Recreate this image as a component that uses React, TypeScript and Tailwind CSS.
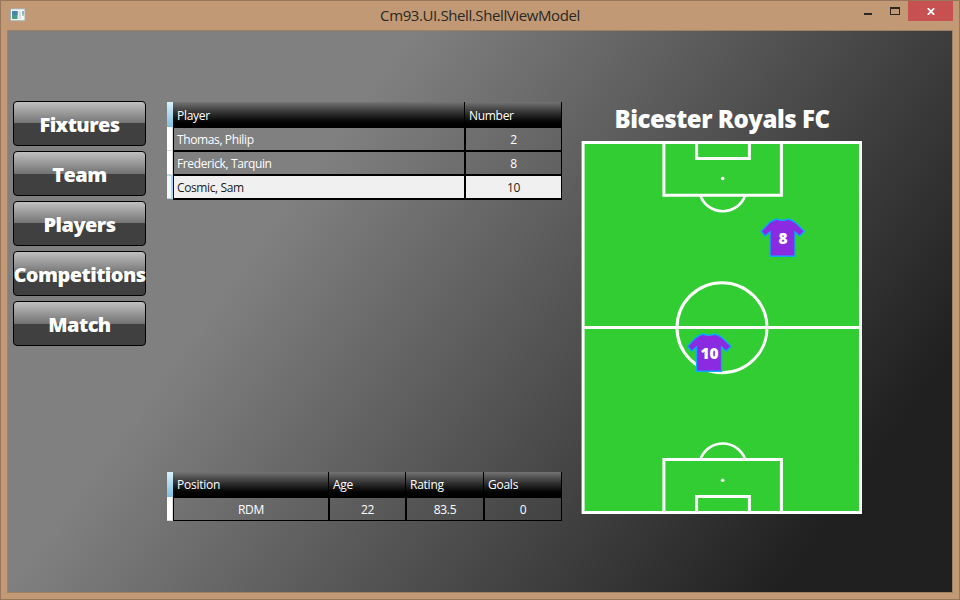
import React from 'react';

const ui = "font-['Open_Sans','Noto_Sans',sans-serif]";

const menu = ['Fixtures', 'Team', 'Players', 'Competitions', 'Match'];

const players = [
  { name: 'Thomas, Philip', number: 2, selected: false },
  { name: 'Frederick, Tarquin', number: 8, selected: false },
  { name: 'Cosmic, Sam', number: 10, selected: true },
];

function TitleBar() {
  return (
    <header className="flex h-[29px] shrink-0 items-start pl-2">
      <svg width="17" height="14" viewBox="0 0 17 14" className="mt-[7px]">
        <rect x="1.5" y="0.8" width="14.5" height="12" rx="1" fill="#f4f5f5" stroke="#a3adb3" />
        <rect x="3" y="3" width="5.5" height="8" fill="#4a9a86" />
        <rect x="3" y="3" width="5.5" height="4" fill="#4585a5" />
        <rect x="9.5" y="3" width="2.5" height="8" fill="#dcdedf" />
        <rect x="13" y="3" width="2" height="3" fill="#86b5cf" />
        <rect x="13" y="6" width="2" height="2" fill="#a9cfaa" />
      </svg>
      <h1 className="ml-[1px] flex-1 pl-[79px] pt-[4px] text-center text-[15px] leading-5 tracking-[-0.4px] text-[#2b2725]">
        Cm93.UI.Shell.ShellViewModel
      </h1>
      <div className="flex h-5 w-[54px] shrink-0">
        <svg width="54" height="20" viewBox="0 0 54 20" shapeRendering="crispEdges">
          <rect x="10" y="12" width="8" height="2" fill="#2b2725" />
          <path d="M36 6h10v8H36zM37 8v5h8V8z" fill="#2b2725" fillRule="evenodd" />
        </svg>
      </div>
      <div className="mr-1.5 flex h-5 w-[45px] shrink-0 justify-center bg-[#c75050] pl-px pt-[7px]">
        <svg width="8" height="7" viewBox="0 0 8 7">
          <path d="M0.8 0.2l6.4 6.6M7.2 0.2L0.8 6.8" stroke="#fff" strokeWidth="1.8" />
        </svg>
      </div>
    </header>
  );
}

function HeaderCell({ className, children }: { className: string; children: React.ReactNode }) {
  return <div className={`flex h-[25px] items-center border-r border-black ${className}`}>{children}</div>;
}

function PlayersTable() {
  return (
    <div className="h-[98px] w-[395px] text-[12px] leading-4 tracking-[-0.38px] text-white">
      <div className="flex h-[25px] bg-gradient-to-b from-[#747474] to-black">
        <div className="w-1.5 bg-gradient-to-b from-[#d8f3fd] to-[#7cbfdf]" />
        <HeaderCell className="w-[292px] pl-[4px] pt-[2px] tracking-[-0.3px]">Player</HeaderCell>
        <HeaderCell className="w-[97px] pl-[4px] pt-[2px] tracking-[-0.3px]">Number</HeaderCell>
      </div>
      {players.map((p) => (
        <div key={p.name} className="flex h-6">
          <div
            className={
              p.selected
                ? 'w-1.5 border-y border-r-2 border-[#a5dcf5] bg-[#f3f8fb]'
                : 'w-1.5 border-b border-r border-[#dcdcdc] bg-white'
            }
          />
          <div className="flex w-[389px] border-y border-l border-black">
            <div
              className={`flex w-[290px] items-center border-black pl-[3px] pt-[2px] ${p.selected ? 'bg-[#f0f0f0] text-[#1c1c1c]' : ''}`}
            >
              {p.name}
            </div>
            <div
              className={`flex flex-1 items-center justify-center border-l-2 border-r border-black pt-[2px] ${p.selected ? 'bg-[#f0f0f0] text-[#1c1c1c]' : ''}`}
            >
              {p.number}
            </div>
          </div>
        </div>
      ))}
      <div className="ml-1.5 h-px bg-black" />
    </div>
  );
}

function StatsTable() {
  return (
    <div className="w-[395px] text-[12px] leading-4 tracking-[-0.25px] text-white">
      <div className="flex h-[25px] bg-gradient-to-b from-[#747474] to-black">
        <div className="w-1.5 bg-gradient-to-b from-[#d8f3fd] to-[#7cbfdf]" />
        <HeaderCell className="w-[156px] pl-[4px]">Position</HeaderCell>
        <HeaderCell className="w-[77px] pl-[4px]">Age</HeaderCell>
        <HeaderCell className="w-[78px] pl-[4px]">Rating</HeaderCell>
        <HeaderCell className="w-[78px] pl-[4px]">Goals</HeaderCell>
      </div>
      <div className="flex h-6">
        <div className="w-1.5 border-b border-r border-[#dcdcdc] bg-white" />
        <div className="flex w-[389px] border-y border-l border-black *:pt-[2px]">
          <div className="flex w-[154px] items-center justify-center">RDM</div>
          <div className="flex w-[77px] items-center justify-center border-l-2 border-black">22</div>
          <div className="flex w-[78px] items-center justify-center border-l-2 border-black">83.5</div>
          <div className="flex flex-1 items-center justify-center border-l-2 border-r border-black">0</div>
        </div>
      </div>
    </div>
  );
}

function Shirt({ x, y, number }: { x: number; y: number; number: number }) {
  return (
    <g transform={`translate(${x} ${y})`}>
      <path
        d="M16.3 1 Q22 3.6 27.7 1 Q32 2 35.5 5 L44 13.3 L39.3 18.3 L34.5 14 V38.3 H9.5 V14 L4.7 18.3 L0.5 13.3 L8.5 5 Q12 2 16.3 1 Z"
        fill="#8a2be2"
        stroke="#08aaff"
        strokeWidth="1.4"
      />
      <text x="22.6" y="26" textAnchor="middle" fontSize="15.5" fontWeight="800" fill="#fff">
        {number}
      </text>
    </g>
  );
}

function Pitch() {
  return (
    <svg width="281" height="374" viewBox="581 140 281 374" className={ui}>
      <rect x="583" y="142.5" width="277.5" height="370" fill="#32cd32" />
      <g fill="none" stroke="#fff" strokeWidth="3">
        <rect x="583.1" y="142.5" width="277.4" height="370" />
        <path d="M583 327.5H861" />
        <circle cx="722" cy="327.7" r="45" />
        <path d="M663.9 142V195.3H781.4V142" />
        <path d="M696.6 142V158.5H749.4V142" />
        <path d="M700.4 195.5A23.8 23.8 0 0 0 745.2 195.5" strokeWidth="2.6" />
        <path d="M663.9 513V459.6H781.4V513" />
        <path d="M696.6 513V496.5H749.4V513" />
        <path d="M700.4 459.3A23.8 23.8 0 0 1 745.2 459.3" strokeWidth="2.6" />
      </g>
      <circle cx="722.7" cy="178.5" r="1.8" fill="#fff" />
      <circle cx="722.7" cy="480.3" r="1.8" fill="#fff" />
      <Shirt x={760.5} y={218} number={8} />
      <Shirt x={687} y={333} number={10} />
    </svg>
  );
}

export default function App() {
  return (
    <div className={`flex h-[600px] w-[960px] flex-col overflow-hidden border border-[#97765b] bg-[#c19a75] ${ui}`}>
      <TitleBar />
      <main className="mx-1.5 flex h-[563px] border border-[#a08062] bg-[linear-gradient(126deg,#808080_30%,#202020_87%)]">
        <nav className="ml-[5px] mt-[70px] flex w-[133px] flex-col gap-[5px]">
          {menu.map((label) => (
            <button
              key={label}
              className="flex h-[45px] items-center justify-center rounded-[4px] border border-black bg-[linear-gradient(#c0c0c0,#737373_50%,#404040_50%)] pt-[3px]"
            >
              <span className="whitespace-nowrap text-[20px] font-extrabold leading-6 tracking-[-0.55px] text-white">
                {label}
              </span>
            </button>
          ))}
        </nav>
        <section className="ml-[21px] mt-[71px] flex h-[419px] w-[395px] flex-col justify-between">
          <PlayersTable />
          <StatsTable />
        </section>
        <section className="ml-[19px] mt-[70px] w-[281px]">
          <h2 className="h-[39px] pl-px pt-[3px] text-center text-[24px] font-extrabold leading-[30px] tracking-[-0.47px] text-white">
            Bicester Royals FC
          </h2>
          <Pitch />
        </section>
      </main>
    </div>
  );
}
